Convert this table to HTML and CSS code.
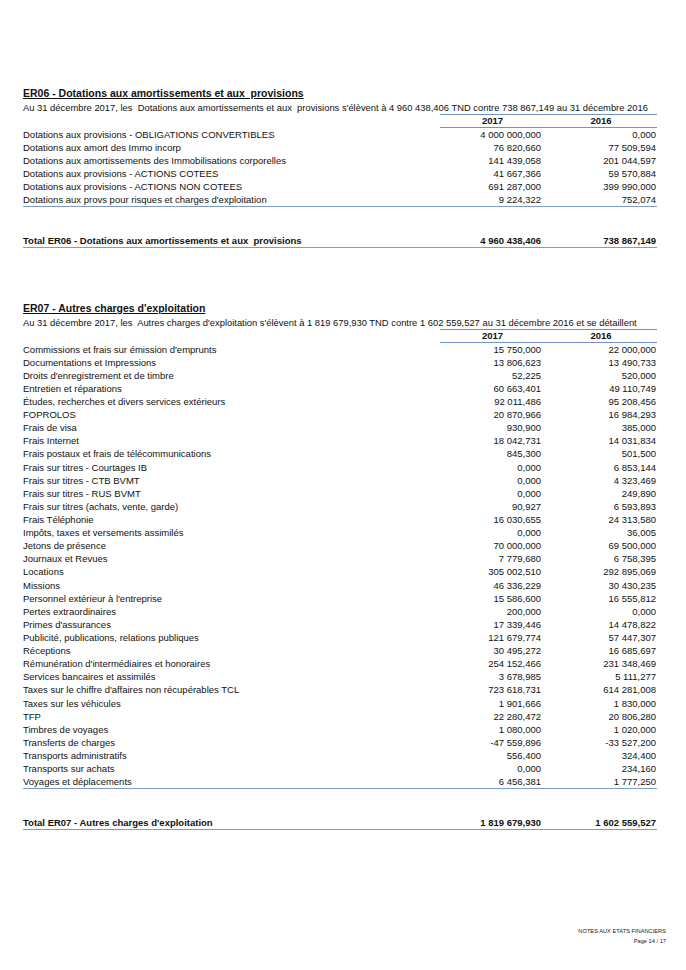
FILE: index.html
```html
<!DOCTYPE html>
<html lang="fr">
<head>
<meta charset="utf-8">
<title>Notes aux états financiers</title>
<link rel="stylesheet" href="styles.css">
</head>
<body>
<div class="page">
  <section class="note note-er06">
    <h2 class="note-title">ER06 - Dotations aux amortissements et aux&nbsp; provisions</h2>
    <p class="intro">Au 31 décembre 2017, les&nbsp; Dotations aux amortissements et aux&nbsp; provisions s'élèvent à 4 960 438,406 TND contre 738 867,149 au 31 décembre 2016</p>
    <div class="fin-table">
      <div class="hd-blank"></div><div class="hd">2017</div><div class="hd">2016</div>
      <div class="lbl">Dotations aux provisions - OBLIGATIONS CONVERTIBLES</div><div class="v1">4 000 000,000</div><div class="v2">0,000</div>
      <div class="lbl">Dotations aux amort des Immo incorp</div><div class="v1">76 820,660</div><div class="v2">77 509,594</div>
      <div class="lbl">Dotations aux amortissements des Immobilisations corporelles</div><div class="v1">141 439,058</div><div class="v2">201 044,597</div>
      <div class="lbl">Dotations aux provisions - ACTIONS COTEES</div><div class="v1">41 667,366</div><div class="v2">59 570,884</div>
      <div class="lbl">Dotations aux provisions - ACTIONS NON COTEES</div><div class="v1">691 287,000</div><div class="v2">399 990,000</div>
      <div class="lbl last">Dotations aux provs pour risques et charges d'exploitation</div><div class="v1 last">9 224,322</div><div class="v2 last">752,074</div>
    </div>
    <div class="total-row">
      <div class="lbl">Total ER06 - Dotations aux amortissements et aux&nbsp; provisions</div><div class="v1">4 960 438,406</div><div class="v2">738 867,149</div>
    </div>
  </section>

  <section class="note note-er07">
    <h2 class="note-title">ER07 - Autres charges d'exploitation</h2>
    <p class="intro">Au 31 décembre 2017, les&nbsp; Autres charges d'exploitation s'élèvent à 1 819 679,930 TND contre 1 602 559,527 au 31 décembre 2016 et se détaillent</p>
    <div class="fin-table">
      <div class="hd-blank"></div><div class="hd">2017</div><div class="hd">2016</div>
      <div class="lbl">Commissions et frais sur émission d'emprunts</div><div class="v1">15 750,000</div><div class="v2">22 000,000</div>
      <div class="lbl">Documentations et Impressions</div><div class="v1">13 806,623</div><div class="v2">13 490,733</div>
      <div class="lbl">Droits d'enregistrement et de timbre</div><div class="v1">52,225</div><div class="v2">520,000</div>
      <div class="lbl">Entretien et réparations</div><div class="v1">60 663,401</div><div class="v2">49 110,749</div>
      <div class="lbl">Études, recherches et divers services extérieurs</div><div class="v1">92 011,486</div><div class="v2">95 208,456</div>
      <div class="lbl">FOPROLOS</div><div class="v1">20 870,966</div><div class="v2">16 984,293</div>
      <div class="lbl">Frais de visa</div><div class="v1">930,900</div><div class="v2">385,000</div>
      <div class="lbl">Frais Internet</div><div class="v1">18 042,731</div><div class="v2">14 031,834</div>
      <div class="lbl">Frais postaux et frais de télécommunications</div><div class="v1">845,300</div><div class="v2">501,500</div>
      <div class="lbl">Frais sur titres - Courtages IB</div><div class="v1">0,000</div><div class="v2">6 853,144</div>
      <div class="lbl">Frais sur titres - CTB BVMT</div><div class="v1">0,000</div><div class="v2">4 323,469</div>
      <div class="lbl">Frais sur titres - RUS BVMT</div><div class="v1">0,000</div><div class="v2">249,890</div>
      <div class="lbl">Frais sur titres (achats, vente, garde)</div><div class="v1">90,927</div><div class="v2">6 593,893</div>
      <div class="lbl">Frais Téléphonie</div><div class="v1">16 030,655</div><div class="v2">24 313,580</div>
      <div class="lbl">Impôts, taxes et versements assimilés</div><div class="v1">0,000</div><div class="v2">36,005</div>
      <div class="lbl">Jetons de présence</div><div class="v1">70 000,000</div><div class="v2">69 500,000</div>
      <div class="lbl">Journaux et Revues</div><div class="v1">7 779,680</div><div class="v2">6 758,395</div>
      <div class="lbl">Locations</div><div class="v1">305 002,510</div><div class="v2">292 895,069</div>
      <div class="lbl">Missions</div><div class="v1">46 336,229</div><div class="v2">30 430,235</div>
      <div class="lbl">Personnel extérieur à l'entreprise</div><div class="v1">15 586,600</div><div class="v2">16 555,812</div>
      <div class="lbl">Pertes extraordinaires</div><div class="v1">200,000</div><div class="v2">0,000</div>
      <div class="lbl">Primes d'assurances</div><div class="v1">17 339,446</div><div class="v2">14 478,822</div>
      <div class="lbl">Publicité, publications, relations publiques</div><div class="v1">121 679,774</div><div class="v2">57 447,307</div>
      <div class="lbl">Réceptions</div><div class="v1">30 495,272</div><div class="v2">16 685,697</div>
      <div class="lbl">Rémunération d'intermédiaires et honoraires</div><div class="v1">254 152,466</div><div class="v2">231 348,469</div>
      <div class="lbl">Services bancaires et assimilés</div><div class="v1">3 678,985</div><div class="v2">5 111,277</div>
      <div class="lbl">Taxes sur le chiffre d'affaires non récupérables TCL</div><div class="v1">723 618,731</div><div class="v2">614 281,008</div>
      <div class="lbl">Taxes sur les véhicules</div><div class="v1">1 901,666</div><div class="v2">1 830,000</div>
      <div class="lbl">TFP</div><div class="v1">22 280,472</div><div class="v2">20 806,280</div>
      <div class="lbl">Timbres de voyages</div><div class="v1">1 080,000</div><div class="v2">1 020,000</div>
      <div class="lbl">Transferts de charges</div><div class="v1">-47 559,896</div><div class="v2">-33 527,200</div>
      <div class="lbl">Transports administratifs</div><div class="v1">556,400</div><div class="v2">324,400</div>
      <div class="lbl">Transports sur achats</div><div class="v1">0,000</div><div class="v2">234,160</div>
      <div class="lbl last">Voyages et déplacements</div><div class="v1 last">6 456,381</div><div class="v2 last">1 777,250</div>
    </div>
    <div class="total-row">
      <div class="lbl">Total ER07 - Autres charges d'exploitation</div><div class="v1">1 819 679,930</div><div class="v2">1 602 559,527</div>
    </div>
  </section>

  <footer class="page-footer">
    <div>NOTES AUX ETATS FINANCIERS</div>
    <div>Page 14 / 17</div>
  </footer>
</div>
</body>
</html>
```

FILE: styles.css
```css
* { box-sizing: border-box; }
html, body { margin: 0; padding: 0; background: #ffffff; }
body {
  font-family: "Liberation Sans", Arial, sans-serif;
  color: #111111;
  width: 686px;
  height: 970px;
  overflow: hidden;
}
.page {
  padding: 86px 0 0 23px;
  width: 686px;
}
.note { width: 634px; }
.note-er07 { margin-top: 53px; }

.note-title {
  margin: 0;
  font-size: 10.5px;
  line-height: 14px;
  font-weight: bold;
  text-decoration: underline;
  text-underline-offset: 1px;
  white-space: nowrap;
}
.intro {
  margin: 0.5px 0 0 0;
  font-size: 9.4px;
  line-height: 13px;
  white-space: nowrap;
}

.fin-table, .total-row {
  display: grid;
  grid-template-columns: 417px 105px 112px;
  font-size: 9.5px;
}
.fin-table > div, .total-row > div {
  height: 13.12px;
  line-height: 13.12px;
  white-space: nowrap;
}
.fin-table > .hd-blank, .fin-table > .hd {
  height: 14px;
  line-height: 11px;
}
.hd {
  font-weight: bold;
  text-align: center;
  border-top: 1.5px solid #6f93c9;
  border-bottom: 1px solid #6f93c9;
}
.v1 { text-align: right; padding-right: 4px; }
.v2 { text-align: right; padding-right: 1px; }
.fin-table > .last { border-bottom: 1.5px solid #7e9cc9; height: 14px; }

.total-row {
  margin-top: 27px;
  font-weight: bold;
}
.total-row > div { border-bottom: 1.5px solid #7e9cc9; height: 14px; }

.page-footer {
  position: absolute;
  right: 20px;
  top: 926px;
  text-align: right;
  font-size: 5.7px;
  line-height: 10px;
  color: #222222;
}
```
